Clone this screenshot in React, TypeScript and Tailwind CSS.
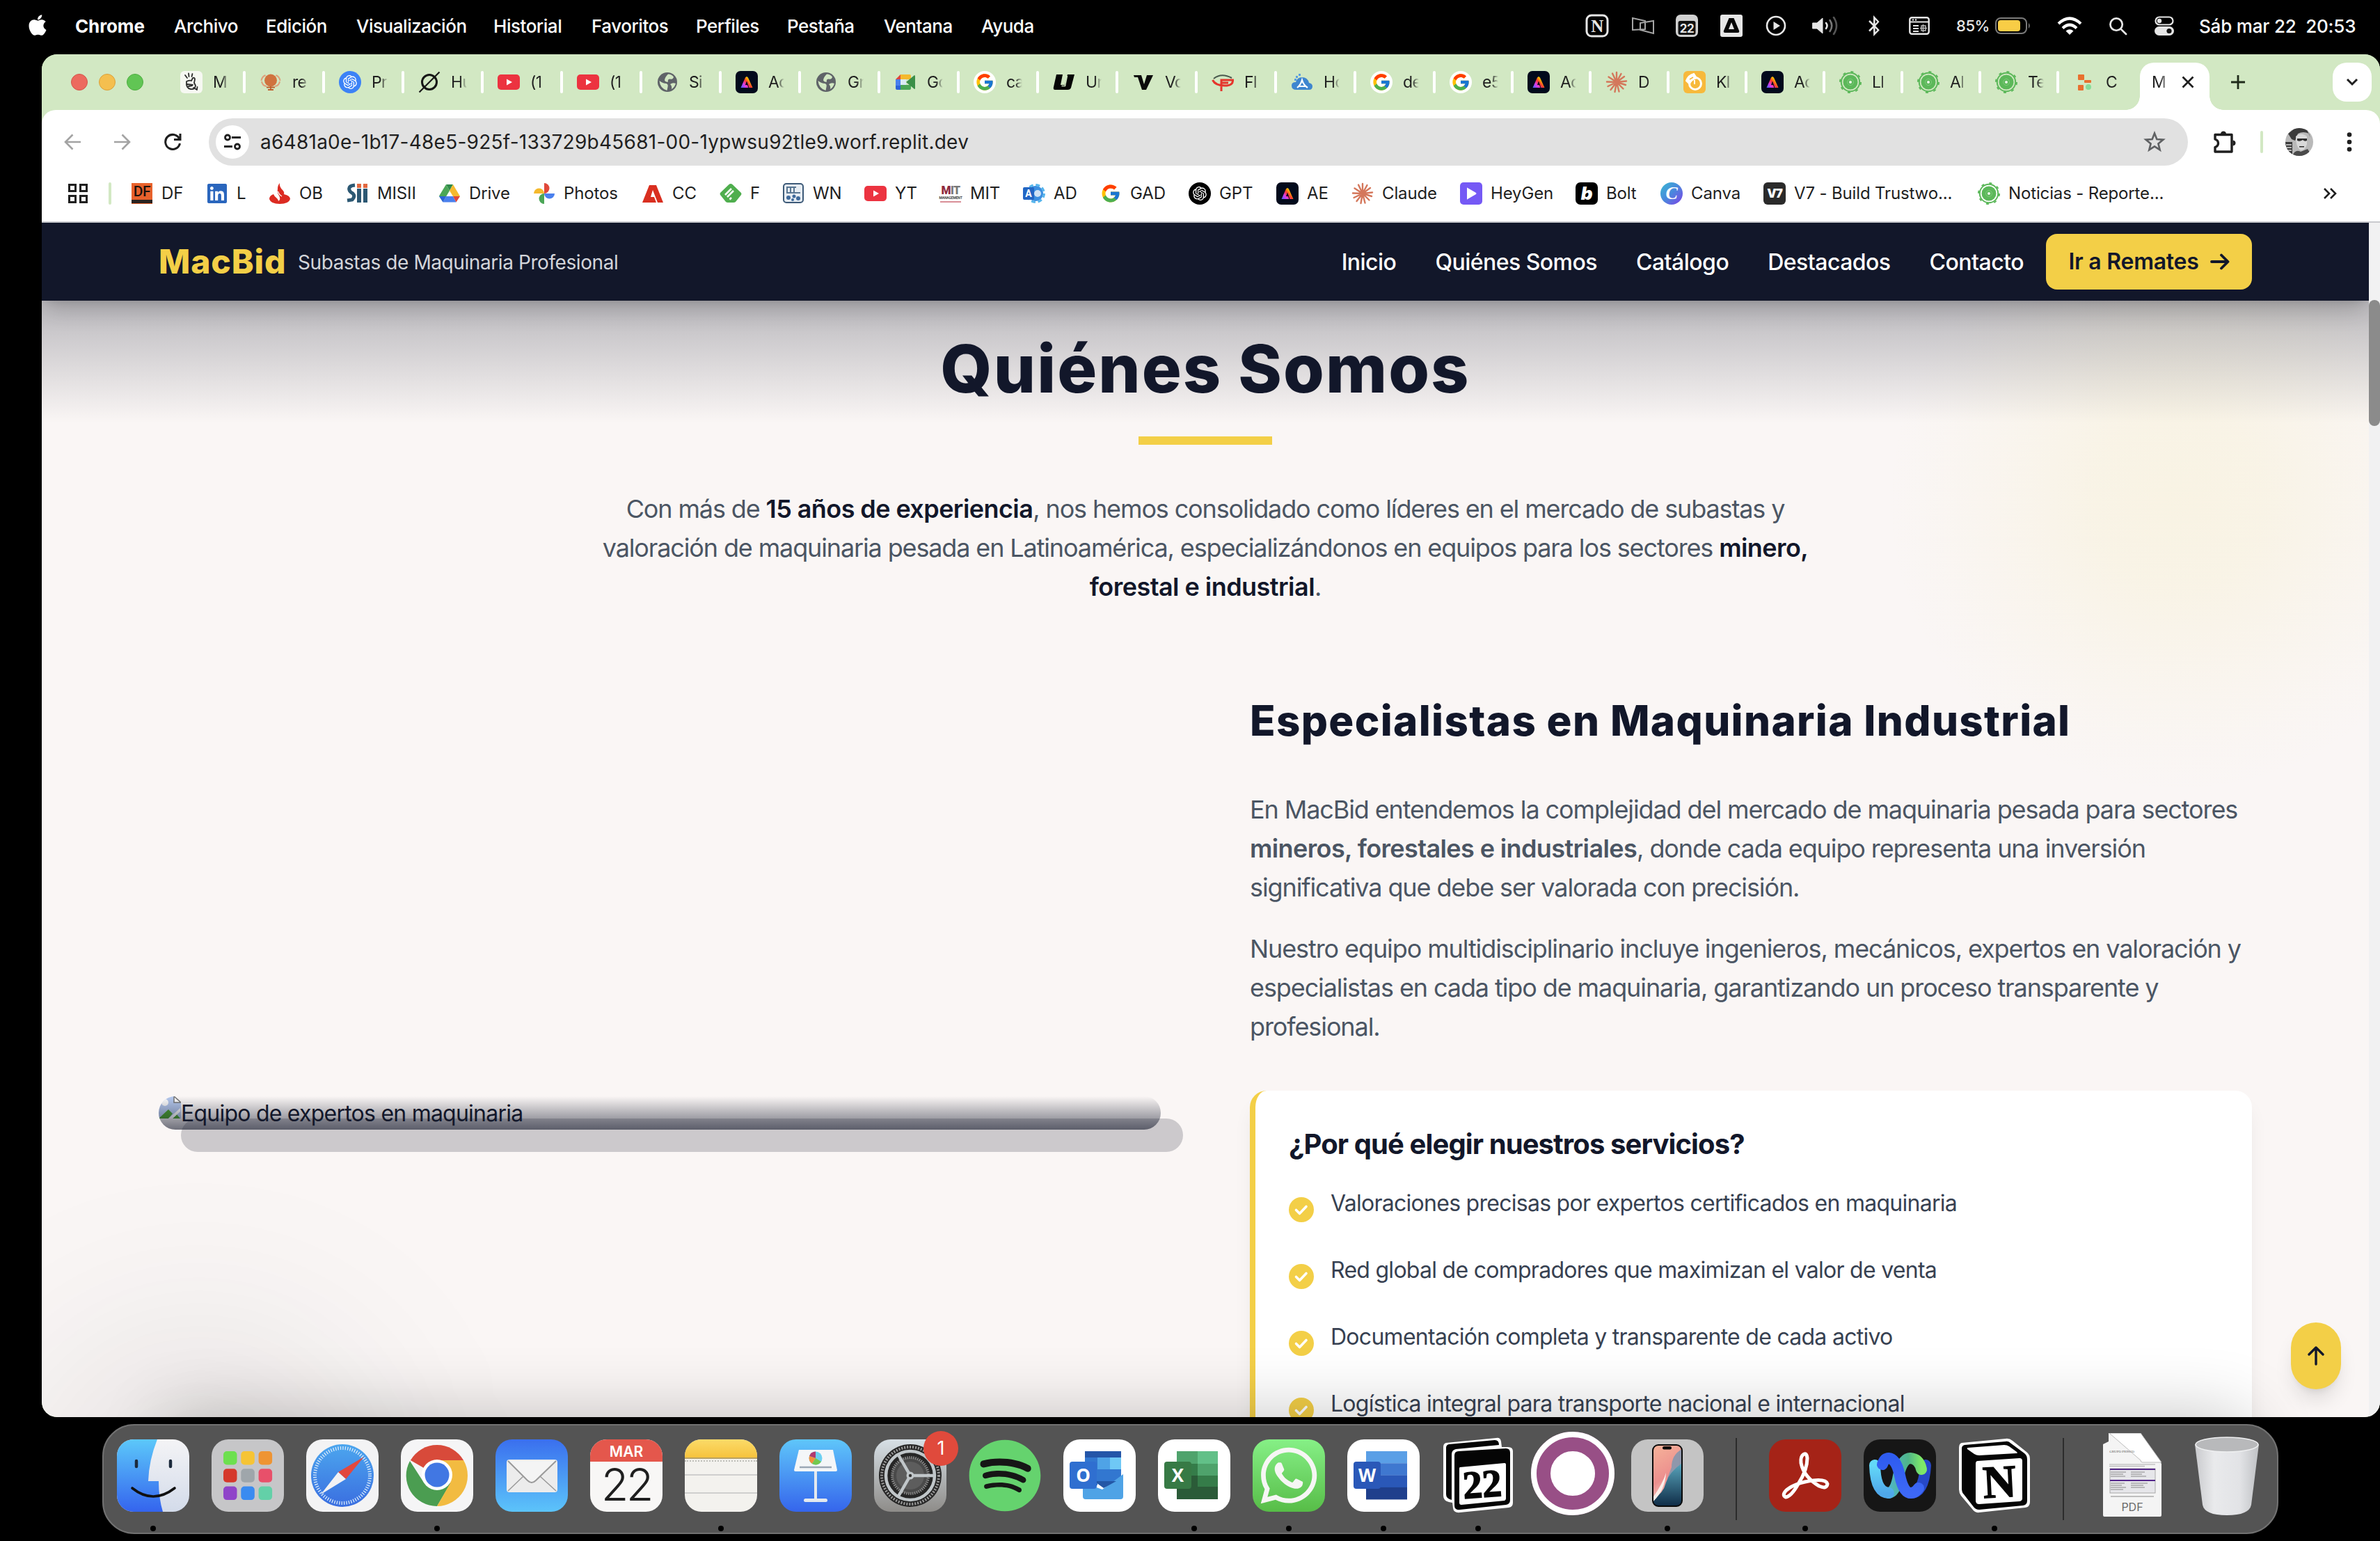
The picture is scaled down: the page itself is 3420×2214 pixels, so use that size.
import React from "react";
import { FaApple, FaBluetoothB, FaSpotify, FaWhatsapp, FaLinkedin } from "react-icons/fa";
import { FcGoogle } from "react-icons/fc";
import { RiOpenaiFill } from "react-icons/ri";

type Draw = () => React.ReactElement;

/* ---------- favicons (32 x 32) ---------- */

const AdobeExpress: Draw = () => (
  <svg viewBox="0 0 32 32" className="size-8">
    <defs>
      <linearGradient id="ae" x1="0" y1="1" x2="1" y2="0.2">
        <stop offset="0" stopColor="#3b6bff" />
        <stop offset="0.3" stopColor="#d63bf0" />
        <stop offset="0.55" stopColor="#ff3a2f" />
        <stop offset="0.75" stopColor="#ffb400" />
        <stop offset="1" stopColor="#33c46b" />
      </linearGradient>
    </defs>
    <rect width="32" height="32" rx="7" fill="#020a1c" />
    <path d="M7.500 24 L14 9.500 Q16 6.500 18 9.500 L24.500 24 H19.500 L16 14.500 L14 20 H17 L18.500 24 Z" fill="url(#ae)" />
  </svg>
);

const Globe: Draw = () => (
  <svg viewBox="0 0 32 32" className="size-8">
    <circle cx="16" cy="16" r="14" fill="#5f6368" />
    <path d="M4.500 14 q5 4 10 4 q3 1 2 5 l-1 5 q-10 -3 -11 -14 z M17 4.500 q5 0 8 4 q-1 4 -5 3 q-4 0 -3 4 q-3 1 -5 -2 q0 -4 5 -9z M20 19 q4 -3 8 -1 q-2 6 -6 8 q1 -4 -2 -7z" fill="#d2e8c3" />
  </svg>
);

const Claude: Draw = () => (
  <svg viewBox="0 0 32 32" className="size-8" stroke="#d4775b" strokeWidth="2.400" strokeLinecap="round">
    <path d="M16 16L16 2M16 16L22.500 4M16 16L27 8M16 16L30 14.500M16 16L29 20M16 16L25.500 25.500M16 16L19.500 29.500M16 16L13.500 30M16 16L7.500 27M16 16L3.500 22M16 16L2 15.500M16 16L4.500 8.500M16 16L10 3.500" />
  </svg>
);

const GreenSun: Draw = () => (
  <svg viewBox="0 0 32 32" className="size-8">
    <circle cx="16" cy="16" r="13.200" fill="none" stroke="#5cb85a" strokeWidth="2" />
    <circle cx="16" cy="16" r="15" fill="none" stroke="#5cb85a" strokeWidth="2" strokeDasharray="4 7.780" />
    <circle cx="16" cy="16" r="10.500" fill="#5cb85a" />
    <circle cx="16" cy="16" r="4.500" fill="none" stroke="#7fcb7c" strokeWidth="1" />
    <circle cx="16" cy="16" r="2" fill="#e9f7e6" />
  </svg>
);

const Yt: Draw = () => (
  <svg viewBox="0 0 32 32" className="size-8">
    <rect y="5" width="32" height="22" rx="5" fill="#ec3340" />
    <path d="M13 11.500 L21 16 L13 20.500 Z" fill="#fff" />
  </svg>
);

const GoogleRound: Draw = () => (
  <div className="flex size-8 items-center justify-center rounded-full bg-white">
    <FcGoogle className="size-[28px]" />
  </div>
);

const GooglePlain: Draw = () => <FcGoogle className="size-[30px]" />;

const Peace: Draw = () => (
  <svg viewBox="0 0 32 32" className="size-8">
    <rect width="32" height="32" rx="6" fill="#f6f8f2" />
    <g fill="none" stroke="#2b2b2b" strokeWidth="1.800" strokeLinecap="round" strokeLinejoin="round">
      <path d="M9 15 q5 -2 7 -1 l2 -4 q3 -1 3 2 l-1 5 l2 4 q-1 6 -7 5 q-7 -1 -6 -11z M10 19 l8 1 M12 22 l5 -1" />
      <path d="M7 6 l3 4 M12 3.500 l0.500 4.500 M17.500 4 l-1 4" />
      <path d="M19 24 l5 3 l0.500 -4" />
    </g>
  </svg>
);

const Balloon: Draw = () => (
  <svg viewBox="0 0 32 32" className="size-8">
    <circle cx="16" cy="13.500" r="9" fill="#d0733f" />
    <path d="M2.500 14 a11 10 0 0 1 6 -8 M29.500 14 a11 10 0 0 0 -6 -8 M3 15 q1 6 7 7 M29 15 q-1 6 -7 7" fill="none" stroke="#dfa07b" strokeWidth="2" />
    <path d="M10 23.500 h12 M12 27 h8 M16 22 v5" stroke="#c0612f" strokeWidth="1.800" />
  </svg>
);

const OpenAiBlue: Draw = () => (
  <div className="flex size-8 items-center justify-center rounded-full bg-[#3c82f6]">
    <RiOpenaiFill className="size-6 text-white" />
  </div>
);

const OpenAiBlack: Draw = () => (
  <div className="flex size-8 items-center justify-center rounded-full bg-black">
    <RiOpenaiFill className="size-6 text-white" />
  </div>
);

const Slashed: Draw = () => (
  <svg viewBox="0 0 32 32" className="size-8" fill="none" stroke="#161616">
    <circle cx="16" cy="16" r="10.500" strokeWidth="3" />
    <path d="M1.500 30.500 L30.500 1.500" strokeWidth="2.200" />
  </svg>
);

const Meet: Draw = () => (
  <svg viewBox="0 0 32 32" className="size-8">
    <path d="M2 12 L9 5 V12 Z" fill="#e0483a" />
    <path d="M9 5 H22 Q24 5 24 7 V12 H9 Z" fill="#f5b92d" />
    <rect x="2" y="12" width="7" height="9" fill="#4a80ee" />
    <path d="M2 21 H9 V27 H4 Q2 27 2 25 Z" fill="#2c63d8" />
    <path d="M9 20 H24 V25 Q24 27 22 27 H9 Z" fill="#4ba657" />
    <path d="M17 16 L29 6 Q30 6 30 8 V25 Q30 26 29 26 Z" fill="#3b8f48" />
    <rect x="9" y="12" width="8" height="8" fill="#dcebf5" />
  </svg>
);

const Ublack: Draw = () => (
  <svg viewBox="0 0 32 32" className="size-8">
    <path d="M5 5 H14 L11 20 H17 L21 5 H31 L26 24 Q25 27 21 27 H3 Q0 27 1 23 Z" fill="#050505" />
    <path d="M12.500 21.500 H17.500 L20.500 7" fill="none" stroke="#d2e8c3" strokeWidth="1.500" />
  </svg>
);

const Vblack: Draw = () => (
  <svg viewBox="0 0 32 32" className="size-8">
    <path d="M2 6 H13 L17 19 L21 6 H30 L20 27 H14 L8 9 H3 Z" fill="#0b0b0b" />
  </svg>
);

const Fl: Draw = () => (
  <svg viewBox="0 0 32 32" className="size-8" fill="none" strokeWidth="3">
    <path d="M3 11 Q14 2 29 10" stroke="#4a5a4e" strokeWidth="2" />
    <path d="M1.500 13 Q6 22 22 21 Q31 20 30.500 13 H14 V29 M14 17 H24" stroke="#e5352c" />
  </svg>
);

const CloudA: Draw = () => (
  <svg viewBox="0 0 32 32" className="size-8">
    <path d="M8 27 Q1 27 1 21 Q1 16 7 16 Q9 9 16 9 Q24 9 26 17 Q31 18 31 22 Q31 27 26 27 Z" fill="#3f86cf" />
    <path d="M9 24 Q14 20 16 13 Q18 20 24 24 M11 22 H21" fill="none" stroke="#fff" strokeWidth="2.200" />
    <g fill="#5a9fe0"><rect x="7" y="7" width="3" height="3" /><rect x="11" y="4" width="3" height="3" /><rect x="5" y="11" width="3" height="3" /></g>
  </svg>
);

const Kling: Draw = () => (
  <svg viewBox="0 0 32 32" className="size-8">
    <rect width="32" height="32" rx="6" fill="#f7b93c" />
    <circle cx="17" cy="18" r="8.500" fill="none" stroke="#fff" strokeWidth="3" />
    <path d="M4 14 Q7 6 15 4 L19 10 Q10 13 9 19 Z M16 13 v6" fill="#fff" stroke="#fff" strokeWidth="2" />
    <path d="M9 12 l5 -3 M18 14 v5" stroke="#f7b93c" strokeWidth="1.600" />
  </svg>
);

const Blocks: Draw = () => (
  <svg viewBox="0 0 32 32" className="size-8">
    <rect x="7" y="5" width="9" height="8" rx="1" fill="#e8702f" />
    <rect x="16" y="13" width="10" height="4" rx="1" fill="#e8702f" />
    <rect x="7" y="20" width="8" height="8" rx="1" fill="#e8702f" />
    <circle cx="22" cy="23" r="4" fill="#86dc9a" />
  </svg>
);

const Df: Draw = () => (
  <div className="flex size-[30px] flex-col items-center bg-[#e8622c] font-['Roboto'] text-[21px] leading-[24px] font-medium tracking-[-0.5px] text-[#1c120d]">
    DF
    <div className="h-[5px] w-[30px] bg-[#2a2320]" />
  </div>
);

const Linkedin: Draw = () => <FaLinkedin className="size-[32px] text-[#2a66bd]" />;

const Flame: Draw = () => (
  <svg viewBox="0 0 32 32" className="size-8">
    <path d="M16 1 Q15 6 20 11 Q23 14 22 17 Q31 19 31 24 Q29 31 16 31 Q3 31 1 24 Q1 19 7 17 Q8 20 12 23 Q14 25 14 27 Q18 24 15 19 Q12 15 13 9 Q13 4 16 1Z" fill="#dc2b22" />
    <path d="M13.500 13 Q15 18 19 20" stroke="#fff" strokeWidth="1.200" fill="none" />
  </svg>
);

const Sii: Draw = () => (
  <svg viewBox="0 0 32 32" className="size-8">
    <path d="M12 4 Q2 5 4 11 Q5 14 9 16 Q13 20 8 25 L1 26" fill="none" stroke="#2c5873" strokeWidth="5" />
    <rect x="15" y="9" width="6" height="20" fill="#2c5873" />
    <rect x="24" y="9" width="6" height="20" fill="#2c5873" />
    <rect x="15" y="2" width="6" height="6" fill="#e2683f" />
    <rect x="24" y="2" width="6" height="6" fill="#e2683f" />
  </svg>
);

const Drive: Draw = () => (
  <svg viewBox="0 0 32 32" className="size-8">
    <path d="M11 3 H21 L16 12 Z" fill="#2f8a49" />
    <path d="M11 3 L16 12 L6.500 28 L1 19.500 Z" fill="#4ba657" />
    <path d="M21 3 L31 20 H21 L16 12 Z" fill="#f5b92d" />
    <path d="M1 20 H11 L6.500 28.500 Z" fill="#2c63d8" />
    <path d="M11 20 H21 L25.500 28.500 H6.500 Z" fill="#4a80ee" />
    <path d="M21 20 H31 L25.500 28.500 Z" fill="#e0483a" />
  </svg>
);

const Photos: Draw = () => (
  <svg viewBox="0 0 32 32" className="size-8">
    <path d="M16 1 A7.500 7.500 0 0 1 16 16 Z" fill="#e0483a" />
    <path d="M31 16 A7.500 7.500 0 0 1 16 16 Z" fill="#4a80ee" />
    <path d="M16 31 A7.500 7.500 0 0 1 16 16 Z" fill="#4ba657" />
    <path d="M1 16 A7.500 7.500 0 0 1 16 16 Z" fill="#f5b92d" />
  </svg>
);

const AdobeRed: Draw = () => (
  <svg viewBox="0 0 32 32" className="size-8">
    <path d="M1 29 L11 4 H21 L31 29 H23 L16 11 L13 21 H18 L21 29 Z" fill="#d92f20" />
  </svg>
);

const Feedly: Draw = () => (
  <svg viewBox="0 0 32 32" className="size-8">
    <path d="M13.500 3 Q16 1 18.500 3 L31 15 Q32 17 31 18 L23 28 Q22 29 20 29 H12 Q10 29 9 28 L1 18 Q0 17 1 15 Z" fill="#4fae4e" />
    <path d="M8 18 L17 9 M11 21 L20 12 M14.500 24.500 L17 22" stroke="#fff" strokeWidth="2.600" />
  </svg>
);

const Wn: Draw = () => (
  <svg viewBox="0 0 32 32" className="size-8">
    <rect x="2" y="2" width="28" height="27" rx="4" fill="#e7edf3" stroke="#3d5a78" strokeWidth="2" />
    <path d="M6 7 h14 M7 7 v8 M12 7 v8 M17 7 v8 M6 15 h20" stroke="#5a7793" strokeWidth="2" />
    <g fill="#3f6a9b"><circle cx="9" cy="22" r="3" /><circle cx="17" cy="20" r="2.500" /><circle cx="23" cy="23" r="3" /><circle cx="15" cy="25" r="2" /></g>
  </svg>
);

const Mit: Draw = () => (
  <div className="flex size-8 flex-col items-center justify-center font-['Roboto'] leading-none">
    <span className="text-[16px] font-black tracking-[-0.5px] text-[#8e2a3d]">M<span className="text-[#777]">IT</span></span>
    <span className="text-[5px] font-bold text-[#444]">MANAGEMENT</span>
    <span className="mt-[2px] h-[2px] w-[30px] bg-[#d98f97]" />
  </div>
);

const Ad: Draw = () => (
  <svg viewBox="0 0 32 32" className="size-8">
    <circle cx="18" cy="16" r="11" fill="#3c8fe0" />
    <circle cx="18" cy="16" r="12.500" fill="none" stroke="#55b5ec" strokeWidth="3" strokeDasharray="6 3.817" />
    <circle cx="21" cy="16" r="5" fill="#cfe2f4" />
    <rect x="0" y="7" width="16" height="18" rx="2" fill="#2266c4" />
    <text x="8" y="21" textAnchor="middle" fontFamily="Roboto" fontWeight="700" fontSize="14" fill="#fff">A</text>
  </svg>
);

const HeyGen: Draw = () => (
  <svg viewBox="0 0 32 32" className="size-8">
    <rect width="32" height="32" rx="5" fill="#7559f5" />
    <path d="M10 8 Q10 7 11 8 L23 15 Q24 16 23 17 L11 24 Q10 25 10 24 Z" fill="#fff" />
  </svg>
);

const Bolt: Draw = () => (
  <div className="flex size-8 items-center justify-center rounded-[7px] bg-black font-['Inter'] text-[26px] leading-none font-black text-white italic">b</div>
);

const Canva: Draw = () => (
  <div className="flex size-8 items-center justify-center rounded-full bg-linear-to-br from-[#35b9d0] via-[#4a86dd] to-[#7433e6] font-['Liberation_Serif'] text-[26px] leading-none font-bold text-white italic">C</div>
);

const V7: Draw = () => (
  <div className="flex size-8 items-center justify-center rounded-[6px] bg-[#2a2a2a] font-['Inter'] text-[17px] leading-none font-black tracking-[-1px] text-white">V7</div>
);

const TABS: { icon: Draw; label: string; w: string }[] = [
  { icon: Peace, label: "M", w: "w-[114px]" },
  { icon: Balloon, label: "re", w: "w-[114px]" },
  { icon: OpenAiBlue, label: "Pr", w: "w-[114px]" },
  { icon: Slashed, label: "Hu", w: "w-[114px]" },
  { icon: Yt, label: "(1", w: "w-[114px]" },
  { icon: Yt, label: "(1", w: "w-[114px]" },
  { icon: Globe, label: "Si", w: "w-[114px]" },
  { icon: AdobeExpress, label: "Ac", w: "w-[114px]" },
  { icon: Globe, label: "Gr", w: "w-[114px]" },
  { icon: Meet, label: "Go", w: "w-[114px]" },
  { icon: GoogleRound, label: "ca", w: "w-[114px]" },
  { icon: Ublack, label: "Ur", w: "w-[114px]" },
  { icon: Vblack, label: "Vc", w: "w-[114px]" },
  { icon: Fl, label: "Fl", w: "w-[114px]" },
  { icon: CloudA, label: "Ho", w: "w-[114px]" },
  { icon: GoogleRound, label: "de", w: "w-[114px]" },
  { icon: GoogleRound, label: "e5", w: "w-[112px]" },
  { icon: AdobeExpress, label: "Ac", w: "w-[112px]" },
  { icon: Claude, label: "D", w: "w-[112px]" },
  { icon: Kling, label: "Kl", w: "w-[112px]" },
  { icon: AdobeExpress, label: "Ac", w: "w-[112px]" },
  { icon: GreenSun, label: "Ll", w: "w-[112px]" },
  { icon: GreenSun, label: "Al", w: "w-[112px]" },
  { icon: GreenSun, label: "Te", w: "w-[112px]" },
  { icon: Blocks, label: "C", w: "w-[96px]" },
];

const BOOKMARKS: { icon: Draw; label: string; w: string }[] = [
  { icon: Df, label: "DF", w: "w-[108px]" },
  { icon: Linkedin, label: "L", w: "w-[90px]" },
  { icon: Flame, label: "OB", w: "w-[112px]" },
  { icon: Sii, label: "MISII", w: "w-[132px]" },
  { icon: Drive, label: "Drive", w: "w-[136px]" },
  { icon: Photos, label: "Photos", w: "w-[156px]" },
  { icon: AdobeRed, label: "CC", w: "w-[112px]" },
  { icon: Feedly, label: "F", w: "w-[90px]" },
  { icon: Wn, label: "WN", w: "w-[118px]" },
  { icon: Yt, label: "YT", w: "w-[108px]" },
  { icon: Mit, label: "MIT", w: "w-[120px]" },
  { icon: Ad, label: "AD", w: "w-[110px]" },
  { icon: GooglePlain, label: "GAD", w: "w-[128px]" },
  { icon: OpenAiBlack, label: "GPT", w: "w-[126px]" },
  { icon: AdobeExpress, label: "AE", w: "w-[108px]" },
  { icon: Claude, label: "Claude", w: "w-[156px]" },
  { icon: HeyGen, label: "HeyGen", w: "w-[166px]" },
  { icon: Bolt, label: "Bolt", w: "w-[122px]" },
  { icon: Canva, label: "Canva", w: "w-[148px]" },
  { icon: V7, label: "V7 - Build Trustwo...", w: "w-[308px]" },
  { icon: GreenSun, label: "Noticias - Reporte...", w: "w-[300px]" },
];

/* ---------- macOS menu bar ---------- */

const MENU = [
  ["Archivo", "w-[132px]"],
  ["Edición", "w-[130px]"],
  ["Visualización", "w-[197px]"],
  ["Historial", "w-[141px]"],
  ["Favoritos", "w-[150px]"],
  ["Perfiles", "w-[131px]"],
  ["Pestaña", "w-[139px]"],
  ["Ventana", "w-[140px]"],
  ["Ayuda", "w-[80px]"],
];

function MenuBar() {
  return (
    <div className="flex h-[78px] items-center pb-[4px] text-[26px] tracking-[-0.018em] text-white">
      <FaApple className="mb-[2px] ml-[39px] h-[34px] w-[30px]" />
      <span className="ml-[39px] w-[142px] font-bold tracking-[-0.005em]">Chrome</span>
      {MENU.map(([m, w]) => (
        <span key={m} className={`${w} font-medium`}>{m}</span>
      ))}
      <div className="ml-auto flex items-center text-[#e6e6e6]">
        <svg viewBox="0 0 34 34" className="size-[34px]">
          <rect x="2" y="2" width="30" height="30" rx="7" fill="none" stroke="#e6e6e6" strokeWidth="3" />
          <text x="17" y="26" textAnchor="middle" fontFamily="Liberation Serif" fontWeight="700" fontSize="25" fill="#e6e6e6">N</text>
        </svg>
        <svg viewBox="0 0 34 26" className="ml-[32px] h-[26px] w-[34px]" fill="none" stroke="#a5a5a5" strokeWidth="2">
          <path d="M2 2 L20 6 V18 L2 19 Z M13 9 L32 6 V24 L13 19 Z" />
        </svg>
        <svg viewBox="0 0 32 32" className="ml-[30px] size-8">
          <rect width="32" height="32" rx="7" fill="#d0d0d0" />
          <rect x="3.500" y="9" width="25" height="20" rx="3" fill="#111" />
          <text x="16" y="26" textAnchor="middle" fontFamily="Inter" fontWeight="700" fontSize="17" fill="#e6e6e6">22</text>
        </svg>
        <svg viewBox="0 0 32 32" className="ml-[32px] size-8">
          <rect width="32" height="32" rx="3" fill="#e6e6e6" />
          <path d="M12.500 5 H19.500 L27 23 Q28 26 25 26 H7 Q4 26 5 23 Z M16 11 L12 21 H20 Z" fillRule="evenodd" fill="#050505" />
        </svg>
        <svg viewBox="0 0 30 30" className="ml-[33px] size-[30px]">
          <circle cx="15" cy="15" r="13" fill="none" stroke="#e6e6e6" strokeWidth="2.600" />
          <path d="M11.500 9 L21 15 L11.500 21 Z" fill="#e6e6e6" />
        </svg>
        <svg viewBox="0 0 40 30" className="ml-[37px] h-[30px] w-[40px]" fill="none" strokeWidth="2.600" strokeLinecap="round">
          <path d="M1 11 H7 L15 4 V26 L7 19 H1 Z" fill="#e6e6e6" stroke="#e6e6e6" strokeWidth="1" />
          <path d="M20 11 Q23 15 20 19" stroke="#e6e6e6" />
          <path d="M25.500 7 Q31 15 25.500 23" stroke="#777" />
          <path d="M31 3 Q39 15 31 27" stroke="#555" />
        </svg>
        <FaBluetoothB className="ml-[36px] h-[30px] w-[26px]" />
        <svg viewBox="0 0 30 26" className="ml-[37px] h-[26px] w-[30px]">
          <rect x="1.300" y="1.300" width="27.400" height="23.400" rx="3" fill="none" stroke="#e6e6e6" strokeWidth="2.400" />
          <path d="M2 7.500 H28 M6 13 H14 M6 17 H14 M6 21 H14" stroke="#e6e6e6" strokeWidth="2" />
          <circle cx="6" cy="4.500" r="1.200" fill="#e6e6e6" /><circle cx="10" cy="4.500" r="1.200" fill="#e6e6e6" />
          <path d="M18 13 h6 v7 h-6z M20.500 11 v11 M16 16.500 h10" fill="none" stroke="#bbb" strokeWidth="1.400" />
        </svg>
        <span className="ml-[38px] w-[56px] text-[22px] font-medium tracking-[-0.02em]">85%</span>
        <svg viewBox="0 0 52 24" className="h-[24px] w-[52px]">
          <rect x="1" y="1" width="44" height="22" rx="7" fill="none" stroke="#7a7a7a" strokeWidth="2" />
          <rect x="4" y="4" width="32" height="16" rx="4" fill="#f8cd46" />
          <path d="M48 8 Q51.500 12 48 16 Z" fill="#7a7a7a" />
        </svg>
        <svg viewBox="0 0 36 28" className="ml-[37px] h-[28px] w-[36px]" fill="none" stroke="#fff" strokeWidth="4.200">
          <path d="M2 11 Q18 -4 34 11" />
          <path d="M8 17.500 Q18 8 28 17.500" />
          <path d="M12.500 21.500 Q18 17 23.500 21.500 L18 27 Z" fill="#fff" stroke="none" />
        </svg>
        <svg viewBox="0 0 28 28" className="ml-[38px] size-[27px]" fill="none" stroke="#e6e6e6" strokeWidth="2.800" strokeLinecap="round">
          <circle cx="11.500" cy="11.500" r="9" /><path d="M18.500 18.500 L26 26" />
        </svg>
        <svg viewBox="0 0 28 28" className="ml-[39px] size-[28px]">
          <rect x="1.500" y="1.500" width="25" height="11" rx="5.500" fill="none" stroke="#e6e6e6" strokeWidth="2.200" />
          <circle cx="7" cy="7" r="3.200" fill="#e6e6e6" />
          <rect y="15" width="28" height="13" rx="6.500" fill="#e6e6e6" />
          <circle cx="21" cy="21.500" r="3.600" fill="#111" />
        </svg>
        <span className="ml-[36px] w-[260px] font-medium tracking-[-0.007em] whitespace-pre text-white">Sáb mar 22  20:53</span>
      </div>
    </div>
  );
}

/* ---------- Chrome ---------- */

function TabStrip() {
  return (
    <div className="flex h-[80px] items-center bg-[#d2e8c3] text-[23px] text-[#24331f]">
      <div className="ml-[42px] flex gap-[16px]">
        <span className="size-6 rounded-full border border-[#d3554a] bg-[#ec6a5e]" />
        <span className="size-6 rounded-full border border-[#dba03a] bg-[#f4bf4f]" />
        <span className="size-6 rounded-full border border-[#4fae42] bg-[#61c554]" />
      </div>
      <div className="ml-[33px] flex">
        {TABS.map((t, i) => (
          <div key={i} className={`${t.w} flex shrink-0 items-center`}>
            <div className="ml-[20px] size-8 shrink-0"><t.icon /></div>
            <span className="ml-[15px] w-[24px] shrink-0 overflow-hidden tracking-[-0.03em] whitespace-nowrap text-[#1f1f1f] [mask-image:linear-gradient(90deg,#000_55%,transparent_95%)]">{t.label}</span>
            {i < 24 && <span className={`${i > 15 ? "ml-[17px]" : "ml-[19px]"} h-8 w-[4px] shrink-0 rounded bg-white`} />}
          </div>
        ))}
      </div>
      <div className="flex h-[68px] items-end self-end">
        <div className="size-[20px] bg-[radial-gradient(circle_at_0_0,transparent_19.5px,white_20px)]" />
        <div className="flex h-full w-[100px] items-center rounded-t-[20px] bg-white pb-[12px] text-[#1f1f1f]">
          <span className="ml-[17px] w-[22px] [mask-image:linear-gradient(90deg,#000_50%,rgba(0,0,0,.4))]">M</span>
          <svg viewBox="0 0 18 18" className="ml-[21px] size-[18px]" stroke="#1f1f1f" strokeWidth="2.800"><path d="M1.500 1.500 L16.500 16.500 M16.500 1.500 L1.500 16.500" /></svg>
        </div>
        <div className="size-[20px] bg-[radial-gradient(circle_at_100%_0,transparent_19.5px,white_20px)]" />
      </div>
      <svg viewBox="0 0 20 20" className="ml-[11px] size-[20px]" stroke="#1f2b1a" strokeWidth="2.800"><path d="M10 0 V20 M0 10 H20" /></svg>
      <div className="mr-[12px] ml-auto flex size-[56px] items-center justify-center rounded-[20px] bg-white">
        <svg viewBox="0 0 18 12" className="h-[12px] w-[18px]" fill="none" stroke="#1f1f1f" strokeWidth="3"><path d="M2 2 L9 9 L16 2" /></svg>
      </div>
    </div>
  );
}

function Toolbar() {
  return (
    <div className="flex h-[92px] items-center rounded-t-[20px] bg-white">
      <svg viewBox="0 0 24 24" className="ml-[32px] size-[24px]" fill="none" stroke="#a3a3a3" strokeWidth="2.600"><path d="M24 12 H2 M12.500 1.500 L2 12 L12.500 22.500" /></svg>
      <svg viewBox="0 0 24 24" className="ml-[48px] size-[24px]" fill="none" stroke="#a3a3a3" strokeWidth="2.600"><path d="M0 12 H22 M11.500 1.500 L22 12 L11.500 22.500" /></svg>
      <svg viewBox="0 0 26 26" className="ml-[47px] size-[26px]" fill="none" stroke="#1f1f1f" strokeWidth="3"><path d="M22.500 8 A10.500 10.500 0 1 0 23.500 15 M24 1 V9.500 H15" /></svg>
      <div className="ml-[39px] flex h-[68px] w-[2844px] items-center rounded-full bg-[#e1e1e1]">
        <div className="ml-[10px] flex size-12 items-center justify-center rounded-full bg-white">
          <svg viewBox="0 0 24 24" className="size-[24px]" fill="none" stroke="#1f1f1f" strokeWidth="2.800">
            <circle cx="5" cy="5.500" r="3.500" /><path d="M11 5.500 H24 M0 18.500 H12" /><circle cx="19" cy="18.500" r="3.500" />
          </svg>
        </div>
        <span className="ml-[16px] text-[28px] tracking-[0.009em] whitespace-nowrap text-[#1f1f1f]">a6481a0e-1b17-48e5-925f-133729b45681-00-1ypwsu92tle9.worf.replit.dev</span>
        <svg viewBox="0 0 32 32" className="mr-[32px] ml-auto size-[32px]" fill="none" stroke="#5f6163" strokeWidth="2.600" strokeLinejoin="miter">
          <path d="M16 3.500 L19.300 12 L28.500 12.600 L21.400 18.400 L23.700 27.300 L16 22.400 L8.300 27.300 L10.600 18.400 L3.500 12.600 L12.700 12 Z" />
        </svg>
      </div>
      <svg viewBox="0 0 34 34" className="ml-[36px] size-[34px]" fill="none" stroke="#1f1f1f" strokeWidth="3.400" strokeLinejoin="round">
        <path d="M3 6.500 H27 V31 H3 V24.500 Q7.500 23 7.500 18.700 Q7.500 14.500 3 13 Z" />
        <path d="M11 5 Q11.500 1.500 15 1.500 Q18.500 1.500 19 5 Z M28.500 14.500 Q32.500 15 32.500 18.500 Q32.500 22 28.500 22.500 Z" fill="#1f1f1f" stroke="none" />
      </svg>
      <span className="ml-[34px] h-8 w-[4px] rounded bg-[#d2e8c3]" />
      <svg viewBox="0 0 40 40" className="ml-[32px] size-[40px]">
        <defs><clipPath id="av"><circle cx="20" cy="20" r="20" /></clipPath></defs>
        <g clipPath="url(#av)">
          <rect width="40" height="40" fill="#b9b9b9" />
          <path d="M0 20 H10 V40 H0 Z M4 8 L14 0 H30 L36 14 L34 8 Q26 4 18 8 L14 18 L9 16 Z" fill="#3b3b3b" />
          <path d="M15 12 Q22 5 31 12 L31 23 Q28 33 22 32 Q15 28 15 12Z" fill="#d9d9d9" />
          <path d="M17 15 H31 V18 Q28 20 25 17 Q21 20 17 18 Z M20 26 h7 v1.500 h-7z" fill="#2d2d2d" />
          <path d="M10 40 Q14 30 22 34 L32 30 L38 40 Z" fill="#4a4a4a" />
          <path d="M1 24 h8 M1 28 h8 M1 32 h8" stroke="#ddd" strokeWidth="1.500" />
        </g>
      </svg>
      <svg viewBox="0 0 8 28" className="ml-[48px] h-[28px] w-[8px]" fill="#1f1f1f"><circle cx="4" cy="3.500" r="3.300" /><circle cx="4" cy="14" r="3.300" /><circle cx="4" cy="24.500" r="3.300" /></svg>
    </div>
  );
}

function Bookmarks() {
  return (
    <div className="flex h-[70px] items-center border-b-2 border-[#c9cace] bg-white pb-[12px] text-[24px] tracking-[-0.006em] text-[#1f1f1f]">
      <svg viewBox="0 0 28 28" className="ml-[38px] size-[28px]" fill="none" stroke="#1f1f1f" strokeWidth="3">
        <path d="M1.500 1.500 h9 v9 h-9z M17.500 1.500 h9 v9 h-9z M1.500 17.500 h9 v9 h-9z M17.500 17.500 h9 v9 h-9z" />
      </svg>
      <span className="ml-[30px] h-8 w-[4px] rounded bg-[#d2e8c3]" />
      <div className="ml-[28px] flex">
        {BOOKMARKS.map((b) => (
          <div key={b.label} className={`${b.w} flex shrink-0 items-center gap-3 whitespace-nowrap`}>
            <div className="flex size-8 shrink-0 items-center justify-center"><b.icon /></div>
            {b.label}
          </div>
        ))}
      </div>
      <svg viewBox="0 0 20 16" className="mr-[62px] ml-auto h-[16px] w-[20px]" fill="none" stroke="#1f1f1f" strokeWidth="2.600"><path d="M2 1 L9 8 L2 15 M11 1 L18 8 L11 15" /></svg>
    </div>
  );
}

/* ---------- MacBid page ---------- */

const BENEFITS = [
  "Valoraciones precisas por expertos certificados en maquinaria",
  "Red global de compradores que maximizan el valor de venta",
  "Documentación completa y transparente de cada activo",
  "Logística integral para transporte nacional e internacional",
];

function SiteNav() {
  return (
    <header className="relative z-10 flex h-[112px] items-center bg-[#12172a] px-[168px] shadow-[0_20px_30px_-6px_rgba(0,0,0,0.16),0_8px_12px_-8px_rgba(0,0,0,0.12)]">
      <span className="w-[184px] text-[48px] leading-[56px] font-extrabold tracking-[0.018em] text-[#f3cf47]">MacBid</span>
      <span className="mt-[2px] ml-[16px] text-[28px] tracking-[-0.015em] whitespace-nowrap text-[#d3d5da]">Subastas de Maquinaria Profesional</span>
      <nav className="mt-[2px] ml-auto flex gap-[56px] text-[32px] font-medium tracking-[-0.0165em] whitespace-nowrap text-white">
        <span>Inicio</span>
        <span>Quiénes Somos</span>
        <span>Catálogo</span>
        <span>Destacados</span>
        <span>Contacto</span>
      </nav>
      <div className="ml-[32px] flex h-[80px] w-[296px] items-center justify-center gap-[16px] rounded-[16px] bg-[#f3cf47] text-[32px] font-semibold tracking-[-0.008em] whitespace-nowrap text-[#12172a]">
        Ir a Remates
        <svg viewBox="0 0 28 24" className="h-[24px] w-[28px]" fill="none" stroke="#12172a" strokeWidth="3.800" strokeLinecap="round" strokeLinejoin="round"><path d="M2 12 H25 M16 2.500 L25.500 12 L16 21.500" /></svg>
      </div>
    </header>
  );
}

function BrokenImage() {
  return (
    <div className="relative h-[48px] w-[1440px]">
      <div className="absolute top-[32px] left-[32px] h-[48px] w-[1440px] rounded-[24px] bg-[#12172a]/20" />
      <div className="relative flex h-[48px] items-center overflow-hidden rounded-[24px]">
        <svg viewBox="0 0 32 32" className="mb-[16px] size-8">
          <path d="M0 0 H22 L32 9 V32 H0 Z" fill="#b6c9ee" />
          <circle cx="9" cy="9" r="5" fill="#fff" />
          <path d="M0 32 L14 19 L20 25 L14 32 Z M20 32 L26 26 L31 32 Z" fill="#4aa02c" />
          <path d="M14 32 L31 17 V22 L20 32 Z" fill="#fff" />
          <path d="M22 0 V9 H32 Z" fill="#fff" stroke="#777" strokeWidth="1.500" />
        </svg>
        <span className="mt-[2px] text-[32px] leading-[48px] tracking-[-0.024em] whitespace-nowrap text-[#12172a]">Equipo de expertos en maquinaria</span>
        <div className="absolute inset-0 bg-linear-to-t from-[#12172a]/60 to-transparent" />
      </div>
    </div>
  );
}

function Page() {
  return (
    <div className="relative h-[1716px] overflow-hidden rounded-b-[20px] bg-[#faf6f5]">
      <div className="flex h-full">
        <div className="relative w-[3344px] overflow-hidden">
          <div className="absolute top-[96px] left-0 h-[192px] w-full bg-linear-to-b from-[#12172a]/30 to-transparent" />
          <div className="absolute top-[-20px] left-[2650px] size-[840px] bg-[radial-gradient(closest-side,rgba(238,222,110,0.13),rgba(238,222,110,0.11)_30%,rgba(238,222,110,0.055)_60%,rgba(238,222,110,0.015)_85%,transparent)]" />
          <div className="absolute top-[1580px] left-[-30px] size-[512px] rounded-full bg-[#12172a]/8 blur-[120px]" />
          <SiteNav />
          <main className="relative px-[168px] pt-[50px] text-[#12172a]">
            <h2 className="text-center text-[95px] leading-[96px] font-extrabold tracking-[0.022em]">Quiénes Somos</h2>
            <div className="mx-auto mt-[49px] h-[12px] w-[192px] bg-[#f3cf47]" />
            <p className="mt-[64px] text-center text-[36px] leading-[56px] tracking-[-0.0315em] whitespace-nowrap text-[#4b5563]">
              Con más de <b className="font-semibold tracking-[-0.016em] text-[#12172a]">15 años de experiencia</b>, nos hemos consolidado como líderes en el mercado de subastas y<br />
              valoración de maquinaria pesada en Latinoamérica, especializándonos en equipos para los sectores <b className="font-semibold tracking-[-0.016em] text-[#12172a]">minero,</b><br />
              <b className="font-semibold tracking-[-0.015em] text-[#12172a]">forestal e industrial</b>.
            </p>
            <div className="mt-[128px] grid grid-cols-2 gap-[128px]">
              <div className="pt-[576px]"><BrokenImage /></div>
              <div>
                <h3 className="text-[60px] leading-[72px] font-extrabold tracking-[0.0225em] whitespace-nowrap">Especialistas en Maquinaria Industrial</h3>
                <p className="mt-[64px] text-[36px] leading-[56px] tracking-[-0.0307em] whitespace-nowrap text-[#4b5563]">
                  En MacBid entendemos la complejidad del mercado de maquinaria pesada para sectores<br />
                  <b className="font-semibold tracking-[-0.017em]">mineros, forestales e industriales</b>, donde cada equipo representa una inversión<br />
                  significativa que debe ser valorada con precisión.
                </p>
                <p className="mt-[32px] text-[36px] leading-[56px] tracking-[-0.0305em] whitespace-nowrap text-[#4b5563]">
                  Nuestro equipo multidisciplinario incluye ingenieros, mecánicos, expertos en valoración y<br />
                  especialistas en cada tipo de maquinaria, garantizando un proceso transparente y<br />
                  profesional.
                </p>
                <div className="mt-[64px] h-[600px] rounded-[24px] border-l-8 border-[#f3cf47] bg-white p-[48px] shadow-[0_20px_30px_-6px_rgba(0,0,0,0.08),0_8px_12px_-8px_rgba(0,0,0,0.08)]">
                  <h4 className="pt-px text-[40px] leading-[56px] font-bold tracking-[-0.0225em]">¿Por qué elegir nuestros servicios?</h4>
                  <ul className="mt-[32px] space-y-[43px] text-[32px] leading-[50px] tracking-[-0.0227em] text-[#374151]">
                    {BENEFITS.map((b) => (
                      <li key={b} className="flex h-[53px] items-start gap-[24px]">
                        <svg viewBox="0 0 36 36" className="mt-[16px] size-[36px] shrink-0">
                          <circle cx="18" cy="18" r="18" fill="#f3cf47" />
                          <path d="M10.500 18.500 L15.500 23.500 L25 13.500" fill="none" stroke="#fff" strokeWidth="3.600" strokeLinecap="round" strokeLinejoin="round" />
                        </svg>
                        {b}
                      </li>
                    ))}
                  </ul>
                </div>
              </div>
            </div>
          </main>
          <div className="absolute top-[1716px] left-[180px] h-[400px] w-[2990px] rounded-[24px] shadow-[0_0_100px_rgba(0,0,0,0.24)]" />
          <div className="absolute right-[40px] bottom-[40px] flex h-[96px] w-[72px] items-center justify-center rounded-full bg-[#f3cf47] shadow-[0_20px_30px_-6px_rgba(0,0,0,0.12),0_8px_12px_-8px_rgba(0,0,0,0.12)]">
            <svg viewBox="0 0 24 28" className="h-[28px] w-[24px]" fill="none" stroke="#12172a" strokeWidth="3.400" strokeLinecap="round" strokeLinejoin="round"><path d="M12 26 V2.500 M2 12 L12 2 L22 12" /></svg>
          </div>
        </div>
        <div className="w-[16px] bg-[#f1f1f2] pt-[111px]">
          <div className="h-[181px] w-[16px] rounded-full bg-[#8b8b8b]" />
        </div>
      </div>
    </div>
  );
}

/* ---------- Dock (104 x 104 tiles) ---------- */

const tile = "size-[104px]";

const Finder: Draw = () => (
  <svg viewBox="0 0 104 104" className={tile}>
    <defs>
      <clipPath id="fc"><rect width="104" height="104" rx="24" /></clipPath>
      <linearGradient id="fb" x2="0" y2="1"><stop stopColor="#5cc8fa" /><stop offset="1" stopColor="#3464ee" /></linearGradient>
      <linearGradient id="fw" x2="0" y2="1"><stop stopColor="#f4f4f6" /><stop offset="1" stopColor="#d3dbea" /></linearGradient>
    </defs>
    <g clipPath="url(#fc)">
      <rect width="104" height="104" fill="url(#fw)" />
      <path d="M0 0 H58 Q46 30 45 60 H60 Q60 84 66 104 H0 Z" fill="url(#fb)" />
    </g>
    <path d="M28 31 v8 M77 31 v8" stroke="#1c2a3c" strokeWidth="4.500" strokeLinecap="round" />
    <path d="M22 70 Q52 94 83 70" fill="none" stroke="#111" strokeWidth="3.600" strokeLinecap="round" />
  </svg>
);

const LP = ["#6de04f", "#f6c435", "#ee9433", "#d5382b", "#9fa6ab", "#e8506a", "#8f44c9", "#3a8bf0", "#63d0a8"];
const Launchpad: Draw = () => (
  <svg viewBox="0 0 104 104" className={tile}>
    <rect width="104" height="104" rx="24" fill="#c6c6c8" />
    {LP.map((c, i) => (
      <rect key={c} x={17 + (i % 3) * 25.3} y={17 + Math.floor(i / 3) * 25.3} width="19.500" height="19.500" rx="5" fill={c} />
    ))}
  </svg>
);

const Safari: Draw = () => (
  <svg viewBox="0 0 104 104" className={tile}>
    <defs><linearGradient id="sf" x2="0" y2="1"><stop stopColor="#4ca6ee" /><stop offset="1" stopColor="#3a6ee0" /></linearGradient></defs>
    <rect width="104" height="104" rx="24" fill="#f3f3f4" />
    <circle cx="52" cy="52" r="45" fill="url(#sf)" />
    <circle cx="52" cy="52" r="39.500" fill="none" stroke="#d9ebfb" strokeWidth="5" strokeDasharray="1.300 2.147" />
    <path d="M83 25 L46 47 L57 57 Z" fill="#e2483e" />
    <path d="M21 79 L46 47 L57 57 Z" fill="#f2f2f4" />
  </svg>
);

const ChromeTile: Draw = () => (
  <svg viewBox="0 0 104 104" className={tile}>
    <rect width="104" height="104" rx="24" fill="#f5f5f6" />
    <path d="M52 52 L13.900 30 A44 44 0 0 1 90.100 30 Z" fill="#d84a3a" />
    <path d="M13 31 A44 44 0 0 0 52 96 L72 62 L52 52 L33 62 Z" fill="#4b9d51" />
    <path d="M90.100 30 A44 44 0 0 1 52 96 L71 63 L52 52 L52 30 Z" fill="#f2bb41" />
    <circle cx="52" cy="51" r="22" fill="#fff" />
    <circle cx="52" cy="51" r="17.500" fill="#4177e3" />
  </svg>
);

const Mail: Draw = () => (
  <svg viewBox="0 0 104 104" className={tile}>
    <defs><linearGradient id="ml" x2="0" y2="1"><stop stopColor="#3a6fee" /><stop offset="1" stopColor="#5cc4fa" /></linearGradient></defs>
    <rect width="104" height="104" rx="24" fill="url(#ml)" />
    <rect x="16" y="29" width="73" height="47" rx="4" fill="#ececec" />
    <path d="M18 74 L40 53 M87 74 L64 53" stroke="#999" strokeWidth="1.500" />
    <path d="M18 31 L46 59 Q52 65 58 59 L87 31" fill="#f4f4f4" stroke="#9a9a9a" strokeWidth="2" />
  </svg>
);

const CalendarTile: Draw = () => (
  <div className="flex size-[104px] flex-col items-center overflow-hidden rounded-[24px] bg-[#f8f7f6]">
    <div className="flex h-[32px] w-full items-center justify-center bg-[#e4574c] pt-[3px] text-[21px] font-semibold text-white">MAR</div>
    <div className="text-[64px] leading-[66px] font-light tracking-[-0.05em] text-[#1f1f1f]">22</div>
  </div>
);

const Notes: Draw = () => (
  <div className="size-[104px] overflow-hidden rounded-[24px] bg-[#f3f2ee]">
    <div className="h-[28px] border-b-2 border-[#b9a264] bg-linear-to-b from-[#fbdb68] to-[#f6c33c]" />
    <div className="mt-[2px] border-t-2 border-dotted border-[#bdbdb8]" />
    <div className="mt-[18px] h-[2px] bg-[#cfcfce]" />
    <div className="mt-[24px] h-[2px] bg-[#cfcfce]" />
  </div>
);

const Keynote: Draw = () => (
  <svg viewBox="0 0 104 104" className={tile}>
    <defs><linearGradient id="kn" x2="0" y2="1"><stop stopColor="#5fc6fa" /><stop offset="1" stopColor="#3565ec" /></linearGradient></defs>
    <rect width="104" height="104" rx="24" fill="url(#kn)" />
    <path d="M28 15 H77 L83 44 Q83 46 81 46 H23 Q21 46 21 44 Z" fill="#f4f6f8" />
    <path d="M29 40 H75" stroke="#9aa7b5" strokeWidth="2.500" />
    <circle cx="52" cy="27" r="9.500" fill="#6bd0f2" />
    <path d="M52 27 V17.500 A9.500 9.500 0 0 0 43 24 Z" fill="#b03a70" /><path d="M52 27 L43 24 A9.500 9.500 0 0 0 47 35 Z" fill="#f2903c" /><path d="M52 27 L47 35 A9.500 9.500 0 0 0 60 32 Z" fill="#74c94e" />
    <rect x="50" y="46" width="4" height="40" fill="#e4e9ee" /><rect x="35" y="85" width="34" height="5" rx="2.500" fill="#e4e9ee" />
  </svg>
);

const Settings: Draw = () => (
  <div className="relative size-[104px]">
    <svg viewBox="0 0 104 104" className={tile}>
      <defs><linearGradient id="st" x2="0" y2="1"><stop stopColor="#d7e0e6" /><stop offset="1" stopColor="#8e8c89" /></linearGradient></defs>
      <rect width="104" height="104" rx="24" fill="url(#st)" />
      <circle cx="52" cy="52" r="45" fill="#262626" />
      <circle cx="52" cy="52" r="41" fill="none" stroke="#9a9a9a" strokeWidth="4" strokeDasharray="2 2" />
      <circle cx="52" cy="52" r="35" fill="none" stroke="#c0c6c9" strokeWidth="4.500" />
      <circle cx="52" cy="52" r="26" fill="#4a4a4a" stroke="#8a8a8a" strokeWidth="4" strokeDasharray="1.500 1.500" />
      <circle cx="52" cy="52" r="20" fill="#5d5d5d" />
      <path d="M52 52 H87 M52 52 L34.500 21.500 M52 52 L34.500 82.500" stroke="#c0c6c9" strokeWidth="4.500" />
      <circle cx="52" cy="52" r="5.500" fill="#c0c6c9" /><circle cx="52" cy="52" r="2.200" fill="#333" />
    </svg>
    <div className="absolute -top-[12px] -right-[17px] flex size-[50px] items-center justify-center rounded-full bg-[#e04a3c] text-[27px] text-white">1</div>
  </div>
);

const Spotify: Draw = () => (
  <div className="grid size-[106px] place-items-center [&>*]:col-start-1 [&>*]:row-start-1">
    <div className="size-[90px] rounded-full bg-[#161616]" />
    <FaSpotify className="size-[106px] text-[#65d36e]" />
  </div>
);

const OFFICE = {
  O: ["#2455a8", "#3277d0", "#4fa3e6", "#6fc8f5", "#2f6fd0"],
  X: ["#4fa36c", "#62c088", "#357c49", "#2b5b38", "#377a45"],
  W: ["#5a9fe6", "#3f78d0", "#2a58b8", "#1f3f8c", "#2a58b8"],
};

const Office = ({ kind }: { kind: "O" | "X" | "W" }) => {
  const c = OFFICE[kind];
  return (
    <svg viewBox="0 0 104 104" className={tile}>
      <rect width="104" height="104" rx="24" fill="#fff" />
      {kind === "O" ? (
        <g>
          <rect x="31" y="17" width="52" height="14" fill={c[0]} />
          <rect x="31" y="26" width="18" height="40" fill={c[1]} />
          <rect x="49" y="26" width="18" height="17" fill={c[2]} /><rect x="67" y="26" width="16" height="17" fill={c[3]} />
          <rect x="49" y="43" width="34" height="20" fill={c[1]} />
          <path d="M28 62 L56 72 L86 50 V82 Q86 86 82 86 H32 Q28 86 28 82 Z" fill={c[2]} />
          <path d="M44 60 H76 L58 70 Z" fill="#2357a6" />
        </g>
      ) : kind === "X" ? (
        <g>
          <rect x="27" y="17" width="30" height="18" fill={c[0]} /><rect x="57" y="17" width="29" height="18" fill={c[1]} />
          <rect x="27" y="35" width="30" height="17" fill={c[2]} /><rect x="57" y="35" width="29" height="17" fill={c[0]} />
          <rect x="27" y="52" width="30" height="17" fill={c[3]} /><rect x="57" y="52" width="29" height="17" fill={c[2]} />
          <rect x="27" y="68" width="59" height="18" fill={c[3]} />
        </g>
      ) : (
        <g>
          {[0, 1, 2, 3].map((i) => <rect key={i} x="27" y={17 + i * 17.3} width="59" height="17.500" fill={c[i]} />)}
        </g>
      )}
      <rect x="9" y="32" width="39" height="39" rx="4" fill={c[4]} />
      <text x="28.500" y="61" textAnchor="middle" fontFamily="Open Sans" fontWeight="700" fontSize="26" fill="#fff">{kind}</text>
    </svg>
  );
};

const Whatsapp: Draw = () => (
  <div className="flex size-[104px] items-center justify-center rounded-[24px] bg-linear-to-b from-[#86f086] to-[#57bd47]">
    <FaWhatsapp className="size-[92px] text-[#f6f6f4]" />
  </div>
);

const NotionCal: Draw = () => (
  <svg viewBox="0 0 104 110" className="h-[110px] w-[104px]">
    <path d="M6 8 L78 1 Q84 0 85 6 L86 14 L95 14 Q102 14 102 20 V94 Q102 100 96 101 L26 108 Q17 109 16 102 L15 94 L10 93 Q2 91 2 84 V14 Q2 9 6 8Z" fill="#fff" />
    <path d="M10 10 L76 4 Q82 4 82 11 L20 17 Q14 18 14 25 V90 Q6 88 6 82 V15 Q6 11 10 10Z" fill="#050505" />
    <path d="M24 20 L92 16 Q98 16 98 22 V90 Q98 96 92 97 L26 104 Q18 105 18 98 V26 Q18 20 24 20Z" fill="#050505" />
    <path d="M26 43 L90 37 Q92 37 92 39 V88 Q92 90 90 91 L28 97 Q25 97 25 94 V45 Q25 43 26 43Z" fill="#fff" />
    <text x="58" y="86" textAnchor="middle" fontFamily="Liberation Serif" fontWeight="700" fontSize="56" fill="#050505" stroke="#050505" strokeWidth="1.500" transform="rotate(-4 58 70)">22</text>
  </svg>
);

const Ring: Draw = () => <div className="mb-[6px] size-[120px] shrink-0 rounded-full border-[28px] border-[#984f86] bg-white outline-[8px] -outline-offset-[8px] outline-white" />;

const Phone: Draw = () => (
  <svg viewBox="0 0 104 104" className={tile}>
    <defs>
      <clipPath id="ph"><rect x="31" y="8" width="42" height="88" rx="8" /></clipPath>
      <linearGradient id="pk" x2="0.300" y2="1"><stop stopColor="#f6b49a" /><stop offset="0.600" stopColor="#ec8f8e" /><stop offset="1" stopColor="#f8d8d0" /></linearGradient>
      <linearGradient id="pb" x2="0" y2="1"><stop stopColor="#59a6bd" /><stop offset="1" stopColor="#0f2c47" /></linearGradient>
    </defs>
    <rect width="104" height="104" rx="24" fill="#c4c4c4" />
    <g clipPath="url(#ph)">
      <rect x="31" y="8" width="42" height="88" fill="url(#pk)" />
      <path d="M73 14 Q58 22 58 40 L52 56 L73 44 Z" fill="#8f97ab" />
      <path d="M73 34 Q54 48 50 62 Q46 78 31 86 V96 H73 Z" fill="url(#pb)" />
      <path d="M31 84 Q46 62 50 48 Q49 72 31 90Z" fill="#fbeeea" />
    </g>
    <rect x="31" y="8" width="42" height="88" rx="8" fill="none" stroke="#0a0a0a" strokeWidth="2" />
    <rect x="45" y="10" width="13" height="4.500" rx="2.200" fill="#0a0a0a" />
  </svg>
);

const Acrobat: Draw = () => (
  <svg viewBox="0 0 104 104" className={tile}>
    <rect width="104" height="104" rx="24" fill="#a52317" />
    <path d="M49 22 Q54 18 55 27 Q55 44 42 64 Q32 82 24 83 Q18 80 25 73 Q38 62 64 59 Q82 57 84 64 Q83 72 72 67 Q50 54 46 34 Q45 25 49 22 Z" fill="none" stroke="#fff" strokeWidth="5" strokeLinejoin="round" />
  </svg>
);

const Webex: Draw = () => (
  <svg viewBox="0 0 104 104" className={tile}>
    <defs>
      <linearGradient id="w1" x2="0" y2="1"><stop stopColor="#63d9f8" /><stop offset="1" stopColor="#4fa8ea" /></linearGradient>
      <linearGradient id="w2" x2="1" y2="0"><stop stopColor="#4fb6c8" /><stop offset="0.600" stopColor="#4fb589" /><stop offset="1" stopColor="#7de868" /></linearGradient>
      <linearGradient id="w3" x2="0" y2="1"><stop stopColor="#2f5cf0" /><stop offset="1" stopColor="#3d68f6" /></linearGradient>
    </defs>
    <rect width="104" height="104" rx="24" fill="#161616" />
    <g fill="none" strokeWidth="16" strokeLinecap="round">
      <path d="M89 37 Q87 76 68 77" stroke="#2648c8" />
      <path d="M36 77 Q46 76 50 52 Q56 27 67 27 Q80 28 83 43" stroke="url(#w2)" />
      <path d="M16 37 Q17 76 36 77" stroke="url(#w1)" />
      <path d="M27 36 Q30 27 36 27 Q47 28 52 52 Q57 77 68 77 Q74 77 79 70" stroke="url(#w3)" />
    </g>
  </svg>
);

const NotionTile: Draw = () => (
  <svg viewBox="0 0 104 108" className="h-[108px] w-[104px]">
    <path d="M5 7 L68 1 Q73 0 78 4 L98 20 Q103 24 103 30 V92 Q103 99 96 100 L30 107 Q24 108 20 102 L4 83 Q1 79 1 74 V14 Q1 8 5 7Z" fill="#fff" />
    <path d="M9 10 L68 5 Q72 4 76 8 L95 22 Q99 25 99 31 V90 Q99 96 93 97 L30 103 Q25 103 22 99 L8 81 Q5 78 5 73 V15 Q5 11 9 10Z" fill="#050505" />
    <path d="M14 14 L66 10 Q70 10 73 12 L84 20 Q86 22 83 22 L30 25 Q26 25 23 23 L13 16 Q12 14 14 14Z" fill="#fff" />
    <path d="M28 33 L88 29 Q92 29 92 33 V87 Q92 90 88 91 L30 95 Q25 95 25 90 V37 Q25 33 28 33Z" fill="#fff" />
    <text x="59" y="85" textAnchor="middle" fontFamily="Liberation Serif" fontWeight="700" fontSize="66" fill="#050505" stroke="#050505" strokeWidth="1.500" transform="rotate(-3 59 62)">N</text>
  </svg>
);

const PdfFile: Draw = () => (
  <svg viewBox="0 0 84 120" className="mb-[2px] h-[120px] w-[84px]">
    <path d="M8 0 H54 L84 44 V118 Q84 120 82 120 H2 Q0 120 0 118 V16 L8 12 Z" fill="#f4f4f4" />
    <path d="M9 0 H54 L84 42 H57 Q54 42 54 39 Z" fill="#fff" stroke="#bbb" strokeWidth="1" />
    <path d="M9 45 H75 M9 47.500 H60" stroke="#aaa" strokeWidth="1.200" />
    <rect x="10" y="51" width="65" height="35" fill="#e6e6ea" stroke="#999" strokeWidth="0.800" />
    <rect x="10" y="51" width="65" height="2" fill="#54278a" /><rect x="10" y="67" width="65" height="2" fill="#54278a" />
    <path d="M11 56 h22 M11 59 h18 M11 62 h21 M40 56 h20 M40 59 h16 M40 62 h22 M11 72 h20 M11 75 h16 M11 78 h22 M11 81 h18 M40 72 h24 M40 75 h18 M40 78 h20 M11 91 h62" stroke="#888" strokeWidth="1.200" />
    <text x="27" y="28" textAnchor="middle" fontFamily="Liberation Serif" fontSize="5" fill="#555">GRUPO PRISCO</text>
    <text x="42" y="112" textAnchor="middle" fontFamily="Inter" fontSize="16" fill="#6a6a6a">PDF</text>
  </svg>
);

const Trash: Draw = () => (
  <svg viewBox="0 0 92 114" className="mt-[2px] h-[114px] w-[92px]">
    <defs><linearGradient id="tr" x2="1" y2="0"><stop stopColor="#c9cacd" /><stop offset="0.300" stopColor="#e9eaec" /><stop offset="0.700" stopColor="#e2e3e6" /><stop offset="1" stopColor="#bfc1c4" /></linearGradient></defs>
    <path d="M0 11 L11 98 Q14 113 46 113 Q78 113 81 98 L92 11 Z" fill="url(#tr)" />
    <ellipse cx="46" cy="11.500" rx="45" ry="10.500" fill="#b8b9bb" stroke="#eeeff0" strokeWidth="1.600" />
  </svg>
);

const Outlook: Draw = () => <Office kind="O" />;
const Excel: Draw = () => <Office kind="X" />;
const Word: Draw = () => <Office kind="W" />;

type DockApp = { icon: Draw; open?: boolean };
const DOCK: (DockApp | "sep")[] = [
  { icon: Finder, open: true }, { icon: Launchpad }, { icon: Safari }, { icon: ChromeTile, open: true },
  { icon: Mail }, { icon: CalendarTile }, { icon: Notes, open: true }, { icon: Keynote }, { icon: Settings },
  { icon: Spotify }, { icon: Outlook }, { icon: Excel, open: true },
  { icon: Whatsapp, open: true }, { icon: Word, open: true }, { icon: NotionCal, open: true },
  { icon: Ring }, { icon: Phone, open: true }, "sep", { icon: Acrobat, open: true }, { icon: Webex },
  { icon: NotionTile, open: true }, "sep", { icon: PdfFile }, { icon: Trash },
];

function Dock() {
  return (
    <div className="mt-[10px] ml-[147px] flex h-[158px] w-[3127px] rounded-[46px] border-2 border-[#717171] bg-[#545454] pl-[3px]">
      {DOCK.map((d, i) =>
        d === "sep" ? (
          <div key={i} className="flex w-[62px] shrink-0 justify-center pt-[18px]"><div className="h-[118px] w-[2px] bg-[#2c2c2c]" /></div>
        ) : (
          <div key={i} className="flex w-[136px] shrink-0 flex-col items-center pt-[8px]">
            <div className="flex h-[128px] items-center justify-center"><d.icon /></div>
            <div className={`mt-[8px] size-[8px] rounded-full ${d.open ? "bg-black" : ""}`} />
          </div>
        )
      )}
    </div>
  );
}

export default function App() {
  return (
    <div className="h-[2214px] w-[3420px] overflow-hidden bg-black font-['Inter',sans-serif]">
      <MenuBar />
      <div className="ml-[60px] w-[3360px] overflow-hidden rounded-[22px] bg-[#d2e8c3]">
        <TabStrip />
        <Toolbar />
        <Bookmarks />
        <Page />
      </div>
      <Dock />
    </div>
  );
}
